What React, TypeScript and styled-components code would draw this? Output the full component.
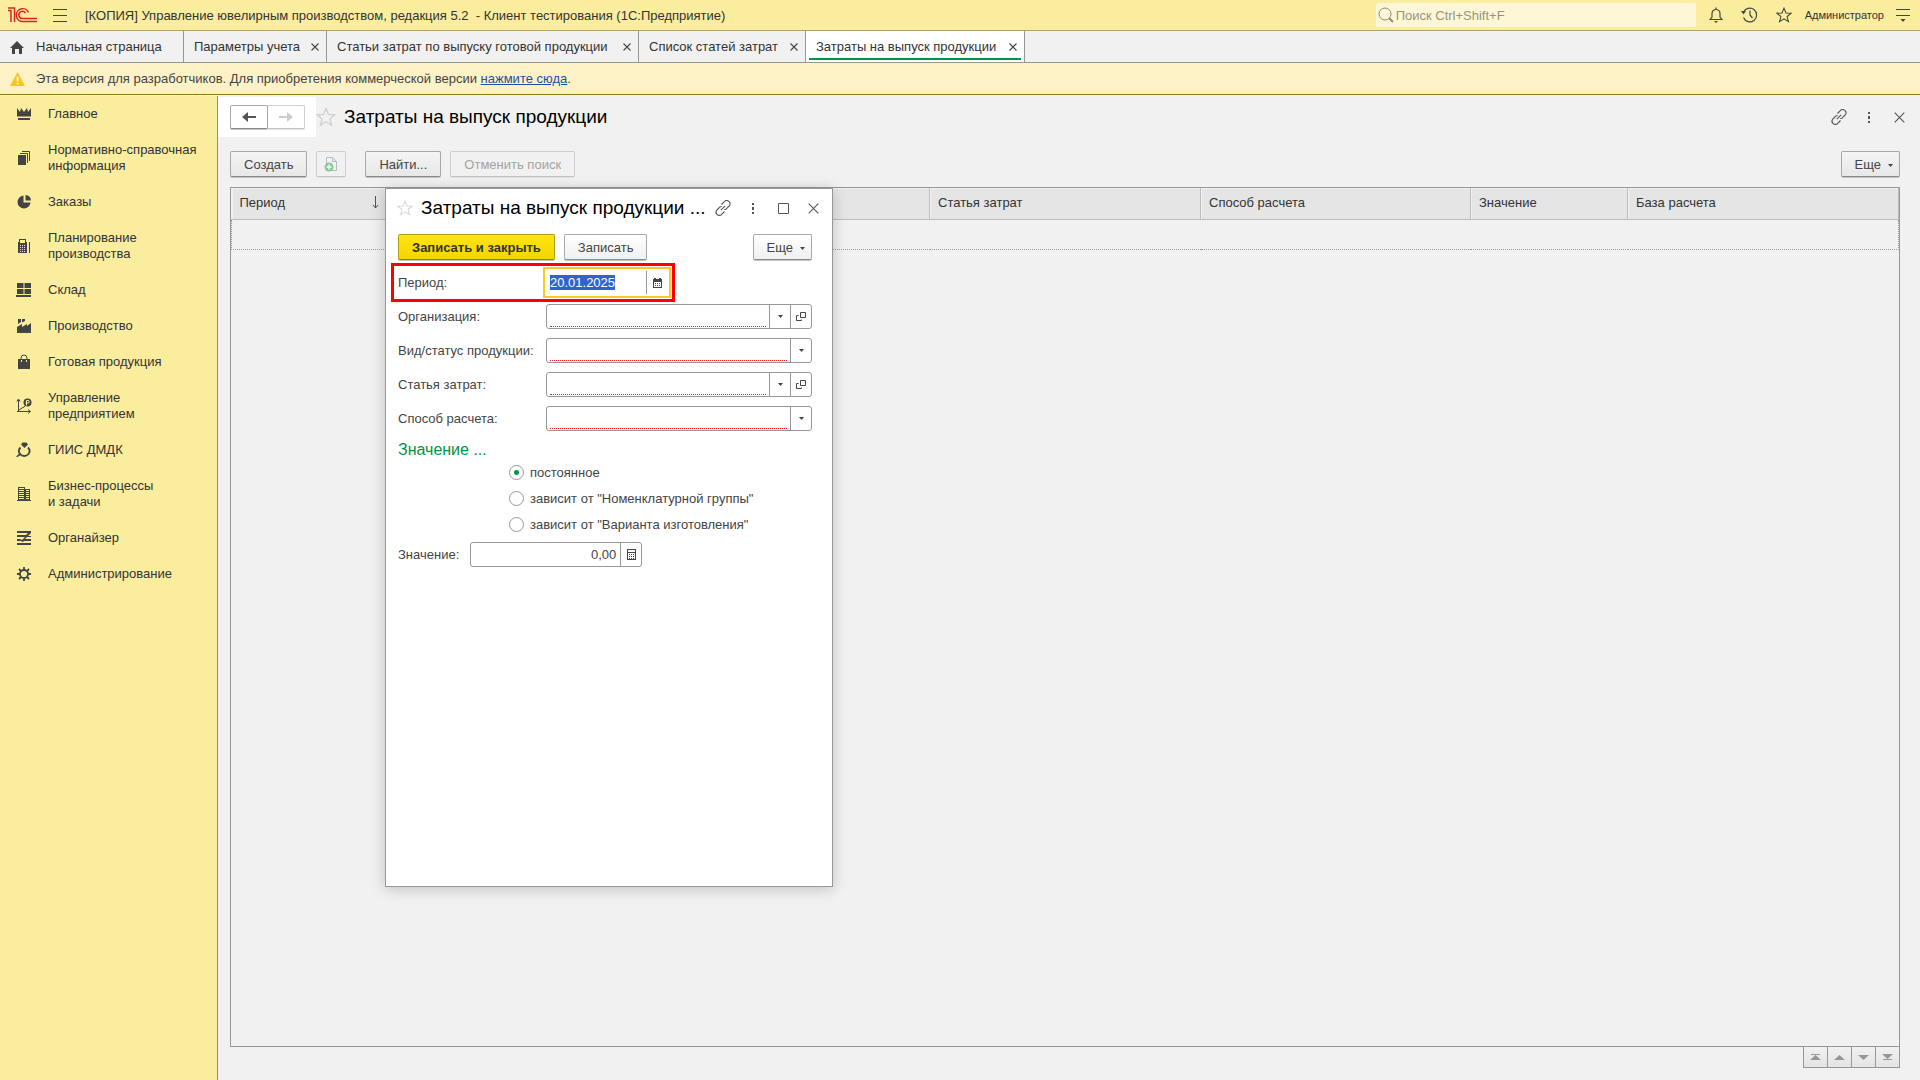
import React, { useEffect, useRef } from 'react';
import styled, { createGlobalStyle, css } from 'styled-components';

const Global = createGlobalStyle`
  * { box-sizing: border-box; }
  body { margin: 0; background: #f1f1f1; }
  body, button, input { font-family: "Liberation Sans", Arial, sans-serif; font-size: 13px; color: #444; }
  button, input { margin: 0; padding: 0; }
  svg { display: block; flex: none; }
`;

const Page = styled.div`
  display: flex;
  flex-direction: column;
  min-height: 100vh;
`;

const TitleBar = styled.header`
  display: flex;
  align-items: center;
  height: 31px;
  padding: 0 7px 0 8px;
  background: #fbed9e;
  border-bottom: 1px solid #aba46f;
`;

const PlainButton = styled.button`
  display: grid;
  place-items: center;
  border: 0;
  background: none;
  color: #444;
`;

const MenuButton = styled(PlainButton)`
  width: 16px;
  height: 24px;
  margin-left: 14px;
`;

const AppTitle = styled.h1`
  flex: 1;
  margin: 0 0 0 17px;
  font-size: 13px;
  font-weight: 400;
  color: #333;
  white-space: pre;
`;

const Search = styled.label`
  display: flex;
  align-items: center;
  gap: 2px;
  width: 320px;
  height: 24px;
  padding-left: 2px;
  border-radius: 2px;
  background: #fdf7d7;
  color: #8f8b76;
`;

const SearchInput = styled.input`
  flex: 1;
  min-width: 0;
  border: 0;
  outline: 0;
  background: none;
  &::placeholder { color: #99937c; opacity: 1; }
`;

const TitleTools = styled.div`
  display: flex;
  align-items: center;
  gap: 14px;
  margin-left: 10px;
`;

const ToolButton = styled(PlainButton)`
  width: 20px;
  height: 24px;
`;

const User = styled.button`
  margin: 0 -5px 0 -3px;
  border: 0;
  background: none;
  font-size: 11px;
  color: #333;
`;

const Tabs = styled.nav`
  display: flex;
  height: 32px;
  border-bottom: 1px solid #979797;
  background: #f1f1f1;
`;

const Tab = styled.div<{ $active?: boolean; $width: number }>`
  display: flex;
  align-items: center;
  justify-content: space-between;
  min-width: ${(p) => p.$width}px;
  padding: 0 6px 0 10px;
  border-right: 1px solid #979797;
  color: #333;
  ${(p) => p.$active && css`
    background: linear-gradient(#009646, #009646) 3px 27px / calc(100% - 6px) 2px no-repeat #fff;
  `}
`;

const HomeTab = styled(Tab)`
  justify-content: flex-start;
  gap: 12px;
`;

const TabLink = styled.a`
  color: inherit;
  text-decoration: none;
  white-space: nowrap;
`;

const CloseButton = styled(PlainButton)`
  width: 10px;
  height: 16px;
`;

const Banner = styled.div`
  display: flex;
  align-items: center;
  gap: 11px;
  height: 32px;
  padding-left: 10px;
  background: #fdf1c6;
  border-bottom: 1px solid #94741a;
`;

const BannerText = styled.p`
  margin: 0;
  a { color: #1d50a8; }
`;

const Body = styled.div`
  display: flex;
  flex: 1;
  padding-top: 1px;
`;

const Sidebar = styled.nav`
  flex: none;
  width: 218px;
  background: #fbed9e;
  border-right: 1px solid #97916a;
`;

const SideLink = styled.a`
  display: flex;
  align-items: center;
  gap: 16px;
  padding: 10px 0 10px 16px;
  line-height: 16px;
  color: #333;
  text-decoration: none;
  white-space: pre-line;
  svg { color: #444; }
`;

const Main = styled.main`
  position: relative;
  display: flex;
  flex: 1;
  flex-direction: column;
  min-width: 0;
  padding: 1px 20px 12px 0;
`;

const FormHead = styled.div`
  display: flex;
  align-items: center;
  height: 40px;
`;

const NavBox = styled.div`
  display: flex;
  align-items: center;
  height: 40px;
  padding: 0 11px 0 12px;
  background: #fff;
`;

const buttonFace = css<{ $off?: boolean }>`
  border: 1px solid ${(p) => (p.$off ? '#cfcfcf' : '#a8a8a8')};
  border-bottom-color: ${(p) => (p.$off ? '#c4c4c4' : '#8a8a8a')};
  border-radius: 2px;
  box-shadow: 0 1px 0 ${(p) => (p.$off ? '#e4e4e4' : '#c4c4c4')};
`;

const NavButton = styled.button<{ $off?: boolean }>`
  position: relative;
  z-index: ${(p) => (p.$off ? 0 : 1)};
  display: grid;
  place-items: center;
  width: 38px;
  height: 24px;
  background: #fff;
  color: ${(p) => (p.$off ? '#ccc' : '#555')};
  ${buttonFace}
  & + & { margin-left: -1px; }
`;

const FormTitle = styled.h2`
  flex: 1;
  margin: 0 0 0 8px;
  font-size: 19px;
  font-weight: 400;
  color: #000;
  white-space: nowrap;
`;

const FormTools = styled.div`
  display: flex;
  align-items: center;
  gap: 14px;
  margin-right: -7px;
`;

const FormTool = styled(PlainButton)`
  width: 16px;
  height: 20px;
  color: #555;
`;

const Toolbar = styled.div`
  display: flex;
  gap: 9px;
  padding: 14px 0 10px 12px;
`;

const Button = styled.button<{ $off?: boolean; $primary?: boolean; $light?: boolean }>`
  display: flex;
  align-items: center;
  justify-content: center;
  gap: 7px;
  height: 26px;
  padding: 0 13px;
  ${buttonFace}
  background: ${(p) => (p.$light ? 'linear-gradient(#fff, #f0f0f0)' : 'linear-gradient(#f4f4f4, #e8e8e8)')};
  color: ${(p) => (p.$off ? '#a3a3a3' : '#444')};
  white-space: nowrap;
  ${(p) => p.$off && css`background: #f1f1f1;`}
  ${(p) => p.$primary && css`
    background: linear-gradient(#ffe510, #f5d500);
    border-color: #b09c10;
    border-bottom-color: #948200;
    color: #333;
    font-weight: 700;
  `}
`;

const IconButton = styled(Button)`
  width: 30px;
  padding: 0;
`;

const MoreButton = styled(Button)`
  margin-left: auto;
  padding-right: 6px;
  svg { margin-top: 3px; }
`;

const Group = styled.div`
  display: flex;
  gap: 9px;
  margin-right: 10px;
`;

const List = styled.div`
  flex: 1;
  margin-left: 12px;
  border: 1px solid #979797;
`;

const Table = styled.table`
  width: 100%;
  border-collapse: collapse;
  table-layout: fixed;
`;

const Th = styled.th<{ $w?: number }>`
  width: ${(p) => (p.$w ? `${p.$w}px` : 'auto')};
  height: 31px;
  padding: 0 8px 2px;
  border-right: 1px solid #bdbdbd;
  border-bottom: 1px solid #bdbdbd;
  box-shadow: inset 1px 1px 0 #f1f1f1;
  background: #e5e5e5;
  color: #333;
  font-weight: 400;
  text-align: left;
`;

const ThLine = styled.span`
  display: flex;
  align-items: center;
  justify-content: space-between;
`;

const EmptyCell = styled.td`
  height: 30px;
  padding: 0;
  border: 1px dotted #999;
`;

const Pager = styled.div`
  display: flex;
  align-self: flex-end;
`;

const PagerButton = styled.button`
  display: grid;
  place-items: center;
  width: 25px;
  height: 21px;
  border: 1px solid #979797;
  border-top: 0;
  background: linear-gradient(#f1f1f1, #e4e4e4);
  color: #979797;
  & + & { margin-left: -1px; }
`;

const Dialog = styled.section`
  position: absolute;
  left: 167px;
  top: 92px;
  width: 448px;
  height: 699px;
  padding: 0 20px 0 12px;
  border: 1px solid #979797;
  background: #fff;
  box-shadow: 0 2px 14px rgba(0, 0, 0, 0.2);
`;

const DialogHead = styled.div`
  display: flex;
  align-items: center;
  height: 38px;
  margin: 0 -9px 2px -1px;
`;

const DialogTools = styled.div`
  display: flex;
  gap: 14px;
`;

const DialogBar = styled.div`
  display: flex;
  gap: 9px;
  padding: 5px 0 3px;
`;

const Marked = styled.div`
  display: flex;
  align-items: center;
  width: 284px;
  height: 39px;
  margin-left: -7px;
  padding: 0 1px 0 4px;
  border: 3px solid #f00;
`;

const Label = styled.label`
  flex: none;
  width: 148px;
`;

const MarkedLabel = styled(Label)`
  width: 145px;
`;

const DateBox = styled.div`
  display: flex;
  flex: 1;
  min-width: 0;
  height: 31px;
  padding: 2px;
  border: 2px solid #fbc926;
`;

const DateInput = styled.input`
  flex: 1;
  min-width: 0;
  padding-left: 3px;
  border: 0;
  border-right: 1px solid #979797;
  outline: 0;
  &::selection { background: #2f64d0; color: #fff; }
`;

const DateButton = styled(PlainButton)`
  width: 20px;
`;

const Rows = styled.div`
  display: flex;
  flex-direction: column;
  gap: 9px;
  padding-top: 2px;
`;

const Row = styled.div`
  display: flex;
  align-items: center;
`;

const Box = styled.div`
  display: flex;
  flex: 1;
  height: 25px;
  border: 1px solid #979797;
  border-radius: 3px;
  background: #fff;
`;

const InputCell = styled.div`
  display: flex;
  flex: 1;
  min-width: 0;
  padding: 0 3px 1px;
`;

const Required = styled.input`
  width: 100%;
  border: 0;
  border-bottom: 1px dotted #e22;
  outline: 0;
  background: none;
`;

const CellButton = styled(PlainButton)`
  width: 21px;
  border-left: 1px solid #979797;
`;

const Fieldset = styled.fieldset`
  min-width: 0;
  margin: 0;
  padding: 0;
  border: 0;
`;

const Legend = styled.legend`
  padding: 10px 0 0;
  font-size: 16px;
  line-height: 18px;
  color: #009646;
`;

const Option = styled.label`
  display: flex;
  align-items: center;
  gap: 6px;
  height: 26px;
  padding-left: 111px;
`;

const Radio = styled.input`
  appearance: none;
  width: 15px;
  height: 15px;
  border: 1px solid #979797;
  border-radius: 50%;
  background: #fff;
  &:checked { background: radial-gradient(circle, #009646 2px, #fff 3px); }
`;

const ValueRow = styled(Row)`
  gap: 11px;
  margin-top: 5px;
`;

const ValueBox = styled(Box)`
  flex: none;
  width: 172px;
`;

const ValueInput = styled.input`
  flex: 1;
  min-width: 0;
  padding-right: 4px;
  border: 0;
  outline: 0;
  background: none;
  text-align: right;
`;

const Logo = () => (
  <svg width="30" height="18" viewBox="0 0 30 18" fill="none" stroke="#d9251c" strokeWidth="1.5">
    <path d="M0 4.500H3V16M0 2H6.500V16" />
    <path d="M20.500 6.500A6.400 6.400 0 1 0 15 15.500H29M17.500 7A3.600 3.600 0 1 0 15 12.500H29" />
  </svg>
);

const Burger = () => (
  <svg width="14" height="13" stroke="currentColor"><path d="M0 .5h14M0 6.500h14M0 12.500h14" /></svg>
);

const Cross = ({ size = 8 }: { size?: number }) => (
  <svg width={size} height={size} viewBox="0 0 8 8" stroke="currentColor" strokeWidth={size > 8 ? 0.8 : 1.1}><path d="M.5.5l7 7M7.500.5l-7 7" /></svg>
);

const Star = ({ size = 18, color = 'currentColor' }: { size?: number; color?: string }) => (
  <svg width={size} height={size} viewBox="0 0 18 18" fill="none" stroke={color} strokeWidth="1.2">
    <path d="M9 1.300 11.200 6.700 17 7 12.500 10.700 14 16.500 9 13.300 4 16.500 5.500 10.700 1 7 6.800 6.700Z" />
  </svg>
);

const LinkIcon = () => (
  <svg width="16" height="16" viewBox="0 0 16 16" fill="none" stroke="currentColor" strokeWidth="1.1">
    <path d="M6.500 4.500 9.300 1.700a3 3 0 0 1 4.800 4.300L11.300 8.800a2.600 2.600 0 0 1-2 .7M9.500 11.500 6.700 14.300a3 3 0 0 1-4.800-4.300L4.700 7.200a2.600 2.600 0 0 1 2-.7M5.800 10.200l4.400-4.400" />
  </svg>
);

const Dots = () => (
  <svg width="2" height="11" fill="currentColor"><path d="M0 0h2v2H0zM0 4h2v3H0zM0 9h2v2H0z" /></svg>
);

const Caret = () => (
  <svg width="5" height="3" fill="currentColor"><path d="M0 0h5L2.500 3Z" /></svg>
);

const Arrow = ({ flip }: { flip?: boolean }) => (
  <svg width="14" height="10" viewBox="0 0 14 10" fill="currentColor">
    <path d={flip ? 'M0 4h8V0l6 5-6 5V6H0Z' : 'M14 4H6V0L0 5l6 5V6h8Z'} />
  </svg>
);

const OpenIcon = () => (
  <svg width="10" height="9" fill="none" stroke="currentColor"><path d="M4.500.5h5v5h-5zM2.500 3.500h-2v5h5v-1" /></svg>
);

const sideIcons: Record<string, React.ReactNode> = {
  crown: <path d="M1 2l3 4 1-4 3 4 3-4 1 4 3-4v8.500H1zM2 12h12v2H2z" />,
  docs: <><path d="M2 5h8v10H2z" /><path d="M4 3.500h7.500V13M6 1.500h7.500V11" fill="none" stroke="currentColor" /></>,
  pie: <><path d="M7.500 1.500a6.500 6.500 0 1 0 7 7h-7z" /><path d="M9.500 1a6 6 0 0 1 5.500 5.500H9.500z" /></>,
  calc: <path fillRule="evenodd" d="M2 4h1V1h7v3h1v11H2zM4 2v3h5V2zM4 7v1h1V7zm2 0v1h1V7zm2 0v1h1V7zM4 9v1h1V9zm2 0v1h1V9zm2 0v1h1V9zM4 11v1h1v-1zm2 0v1h1v-1zm2 0v1h1v-1zM4 13v1h1v-1zm2 0v1h1v-1zm2 0v1h1v-1zM13 4h1v11h-1z" />,
  store: <path d="M1 1h6.500v5H1zM8.500 1H15v5H8.500zM1 7h6.500v5H1zM8.500 7H15v5H8.500zM0 13h15v2H0z" />,
  plant: <path d="M1 15V9l5-3v3l5-3v2l4-3v10zM2 1h3v3L2 6zM6 1h3v2L6 4.500z" />,
  bag: <><path d="M2 5h12v10H2z" /><path d="M5 6V4a3 3 0 0 1 6 0v2" fill="none" stroke="currentColor" /><path d="M5 6h1v2H5zM10 6h1v2h-1z" fill="#fbed9e" /></>,
  chart: <><path d="M2.500 14V2M1 13.500h13M.8 3.500 2.500 1l1.700 2.500M12 11.500l2.500 2-2.500 2M3 12l3-2 2-1 2-2" fill="none" stroke="currentColor" /><circle cx="11.500" cy="4.500" r="4" /><path d="M10.500 7.500V2.500h1.500a1 1 0 0 1 0 2.500H9.500" fill="none" stroke="#fbed9e" /></>,
  ring: <><path d="M4.500 5.500a5 5 0 0 0-.5 6.500 5.500 5.500 0 0 0 8.500 0 5 5 0 0 0-.5-6.500" fill="none" stroke="currentColor" strokeWidth="1.800" /><path d="M5 2.500 6.500.5h4L12 2.500 8.500 6zM0 14.500 4 11l1.500 1.500-4 2.500z" /></>,
  office: <path fillRule="evenodd" d="M2 1h7v2h5v11h1v1H1v-1h1zM3 2v1h5V2zm0 2v1h5V4zm0 2v1h5V6zm0 2v1h5V8zm0 2v1h5v-1zm0 2v1h5v-1zM10 4v1h3V4zm0 2v1h3V6zm0 2v1h3V8zm0 2v1h3v-1zm0 2v1h3v-1z" />,
  list: <path d="M1 1h14v2l-3 3h3v1H11L9 9h6v2H8l-1 1-2-1H1V9h3l2 1 3-3H1V5h9l2-2H1zM1 13h14v2H1z" />,
  gear: <><circle cx="8" cy="8" r="4" fill="none" stroke="currentColor" strokeWidth="1.800" /><path d="M8 1v2.500M8 12.500V15M1 8h2.500M12.500 8H15M3 3l2 2M11 11l2 2M13 3l-2 2M5 11l-2 2" stroke="currentColor" strokeWidth="1.800" /></>,
};

const sections: [string, string][] = [
  ['crown', 'Главное'],
  ['docs', 'Нормативно-справочная\nинформация'],
  ['pie', 'Заказы'],
  ['calc', 'Планирование\nпроизводства'],
  ['store', 'Склад'],
  ['plant', 'Производство'],
  ['bag', 'Готовая продукция'],
  ['chart', 'Управление\nпредприятием'],
  ['ring', 'ГИИС ДМДК'],
  ['office', 'Бизнес-процессы\nи задачи'],
  ['list', 'Органайзер'],
  ['gear', 'Администрирование'],
];

const tabs = [
  { text: 'Параметры учета', width: 143 },
  { text: 'Статьи затрат по выпуску готовой продукции', width: 312 },
  { text: 'Список статей затрат', width: 167 },
  { text: 'Затраты на выпуск продукции', width: 219, active: true },
];

const fields = [
  { id: 'org', label: 'Организация:', open: true },
  { id: 'kind', label: 'Вид/статус продукции:', open: false },
  { id: 'item', label: 'Статья затрат:', open: true },
  { id: 'method', label: 'Способ расчета:', open: false },
];

const options = ['постоянное', 'зависит от "Номенклатурной группы"', 'зависит от "Варианта изготовления"'];

const pagerPaths = ['M1 0h9v1H1zM5.500 1 11 6H0z', 'M5.500 1 11 6H0z', 'M0 1h11L5.500 6z', 'M0 0h11L5.500 5zM1 5h9v1H1z'];

const CostDialog = () => {
  const date = useRef<HTMLInputElement>(null);
  useEffect(() => {
    date.current?.focus();
    date.current?.select();
  }, []);
  return (
    <Dialog role="dialog">
      <DialogHead>
        <Star size={16} color="#d8d8d8" />
        <FormTitle>Затраты на выпуск продукции ...</FormTitle>
        <DialogTools>
          <FormTool><LinkIcon /></FormTool>
          <FormTool><Dots /></FormTool>
          <FormTool><svg width="11" height="11" fill="none" stroke="currentColor"><path d="M.5.5h10v10H.5z" /></svg></FormTool>
          <FormTool><Cross size={11} /></FormTool>
        </DialogTools>
      </DialogHead>
      <DialogBar>
        <Button $primary>Записать и закрыть</Button>
        <Button $light>Записать</Button>
        <MoreButton $light>Еще <Caret /></MoreButton>
      </DialogBar>
      <Marked>
        <MarkedLabel htmlFor="period">Период:</MarkedLabel>
        <DateBox>
          <DateInput id="period" ref={date} defaultValue="20.01.2025" />
          <DateButton>
            <svg width="9" height="10" fill="currentColor"><path fillRule="evenodd" d="M1 0h2v1h3V0h2v1h1v9H0V1h1zM1 4v5h7V4zM2 5h1v1H2zM4 5h1v1H4zM6 5h1v1H6zM2 7h1v1H2zM4 7h1v1H4zM6 7h1v1H6z" /></svg>
          </DateButton>
        </DateBox>
      </Marked>
      <Rows>
        {fields.map((f) => (
          <Row key={f.id}>
            <Label htmlFor={f.id}>{f.label}</Label>
            <Box>
              <InputCell><Required id={f.id} /></InputCell>
              <CellButton><Caret /></CellButton>
              {f.open && <CellButton><OpenIcon /></CellButton>}
            </Box>
          </Row>
        ))}
      </Rows>
      <Fieldset>
        <Legend>Значение ...</Legend>
        {options.map((o, i) => (
          <Option key={o}>
            <Radio type="radio" name="value-mode" defaultChecked={i === 0} />
            {o}
          </Option>
        ))}
      </Fieldset>
      <ValueRow>
        <label htmlFor="value">Значение:</label>
        <ValueBox>
          <ValueInput id="value" defaultValue="0,00" />
          <CellButton>
            <svg width="9" height="11" fill="currentColor"><path fillRule="evenodd" d="M0 0h9v11H0zM1 1v2h7V1zM1 4v6h7V4zM2 5h1v1H2zM4 5h1v1H4zM6 5h1v1H6zM2 7h1v1H2zM4 7h1v1H4zM6 7h1v1H6zM2 9h1v1H2zM4 9h1v1H4zM6 9h1v1H6z" /></svg>
          </CellButton>
        </ValueBox>
      </ValueRow>
    </Dialog>
  );
};

export default function App() {
  return (
    <Page>
      <Global />
      <TitleBar>
        <Logo />
        <MenuButton><Burger /></MenuButton>
        <AppTitle>{'[КОПИЯ] Управление ювелирным производством, редакция 5.2  - Клиент тестирования (1С:Предприятие)'}</AppTitle>
        <Search>
          <svg width="16" height="16" fill="none" stroke="currentColor"><circle cx="7" cy="7" r="6" /><path d="M11 11l4 4" strokeWidth="2" /></svg>
          <SearchInput placeholder="Поиск Ctrl+Shift+F" />
        </Search>
        <TitleTools>
          <ToolButton>
            <svg width="14" height="16" viewBox="0 0 14 16" fill="none" stroke="currentColor" strokeWidth="1.200"><path d="M1 12.500 3 10V6.500C3 4 5 2.500 7 2.500S11 4 11 6.500V10l2 2.500ZM7 .5v2" /><path d="M5 14h4l-2 2z" fill="currentColor" stroke="none" /></svg>
          </ToolButton>
          <ToolButton>
            <svg width="17" height="16" viewBox="0 0 17 16" fill="none" stroke="currentColor" strokeWidth="1.200"><path d="M2.500 5.500A6.800 6.800 0 1 1 2.500 10.500M9 3.500V8l2.500 3" /><path d="M0 4h5L2.500 7.500z" fill="currentColor" stroke="none" /></svg>
          </ToolButton>
          <ToolButton><Star size={16} /></ToolButton>
          <User>Администратор</User>
          <ToolButton>
            <svg width="14" height="14" stroke="currentColor" fill="currentColor"><path d="M0 1.500h14M0 7.500h14" /><path d="M4.500 11h5L7 14z" stroke="none" /></svg>
          </ToolButton>
        </TitleTools>
      </TitleBar>
      <Tabs>
        <HomeTab $width={184}>
          <svg width="14" height="14" fill="#444"><path d="M7 1 14 8H12v6H9V9H5v5H2V8H0Z" /></svg>
          <TabLink href="#">Начальная страница</TabLink>
        </HomeTab>
        {tabs.map((t) => (
          <Tab key={t.text} $active={t.active} $width={t.width}>
            <TabLink href="#">{t.text}</TabLink>
            <CloseButton><Cross /></CloseButton>
          </Tab>
        ))}
      </Tabs>
      <Banner>
        <svg width="15" height="14"><path d="M7.500 0 15 14H0Z" fill="#fbc41c" /><path d="M6.700 4.500h1.800v5H6.700zM6.700 10.700h1.800v1.800H6.700z" fill="#fff" /></svg>
        <BannerText>Эта версия для разработчиков. Для приобретения коммерческой версии <a href="#">нажмите сюда</a>.</BannerText>
      </Banner>
      <Body>
        <Sidebar>
          {sections.map(([icon, text]) => (
            <SideLink href="#" key={icon}>
              <svg width="16" height="16" viewBox="0 0 16 16" fill="currentColor">{sideIcons[icon]}</svg>
              {text}
            </SideLink>
          ))}
        </Sidebar>
        <Main>
          <FormHead>
            <NavBox>
              <NavButton><Arrow /></NavButton>
              <NavButton $off><Arrow flip /></NavButton>
            </NavBox>
            <Star size={20} color="#d0d0d0" />
            <FormTitle>Затраты на выпуск продукции</FormTitle>
            <FormTools>
              <FormTool><LinkIcon /></FormTool>
              <FormTool><Dots /></FormTool>
              <FormTool><Cross size={11} /></FormTool>
            </FormTools>
          </FormHead>
          <Toolbar>
            <Group>
              <Button>Создать</Button>
              <IconButton $off>
                <svg width="14" height="16" fill="none"><path d="M2.500 8V1.500h6l4 4v9H7M8.500 1.500v4h4" stroke="#b4bcc8" /><circle cx="5" cy="11" r="4.500" fill="#8cc894" /><path d="M5 8.500v5M2.500 11h5" stroke="#fff" strokeWidth="1.400" /></svg>
              </IconButton>
            </Group>
            <Button>Найти...</Button>
            <Button $off>Отменить поиск</Button>
            <MoreButton>Еще <Caret /></MoreButton>
          </Toolbar>
          <List>
            <Table>
              <thead>
                <tr>
                  <Th $w={156}>
                    <ThLine>Период <svg width="7" height="13" stroke="#555" fill="none"><path d="M3.500 0v12M1 9l2.500 3L6 9" /></svg></ThLine>
                  </Th>
                  <Th />
                  <Th />
                  <Th $w={271}>Статья затрат</Th>
                  <Th $w={270}>Способ расчета</Th>
                  <Th $w={157}>Значение</Th>
                  <Th $w={271}>База расчета</Th>
                </tr>
              </thead>
              <tbody>
                <tr><EmptyCell colSpan={7} /></tr>
              </tbody>
            </Table>
          </List>
          <Pager>
            {pagerPaths.map((d) => (
              <PagerButton key={d}><svg width="11" height="6" fill="currentColor"><path d={d} /></svg></PagerButton>
            ))}
          </Pager>
          <CostDialog />
        </Main>
      </Body>
    </Page>
  );
}
